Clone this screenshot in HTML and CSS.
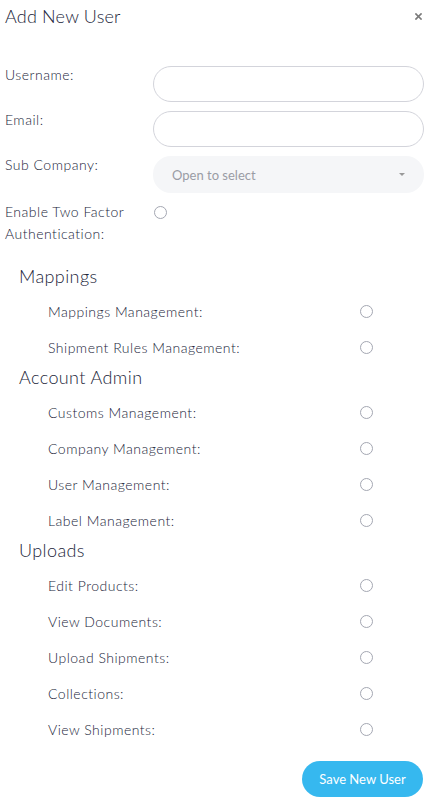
FILE: index.html
```html
<!DOCTYPE html>
<html lang="en">
<head>
<meta charset="utf-8">
<title>Add New User</title>
<link rel="stylesheet" href="styles.css">
</head>
<body>
<div class="modal">
  <header class="modal-header">
    <h1 class="modal-title">Add New User</h1>
    <button class="close-btn" aria-label="Close">
      <svg width="7" height="7" viewBox="0 0 7 7"><path d="M1 1 L6 6 M6 1 L1 6" stroke="#7a7a7a" stroke-width="1.7" stroke-linecap="square"/></svg>
    </button>
  </header>

  <div class="fields">
    <div class="field">
      <label class="field-label">Username:</label>
      <input class="text-input" type="text">
    </div>
    <div class="field">
      <label class="field-label">Email:</label>
      <input class="text-input" type="text">
    </div>
    <div class="field">
      <label class="field-label">Sub Company:</label>
      <div class="select">
        <span class="select-placeholder">Open to select</span>
        <span class="caret"></span>
      </div>
    </div>
    <div class="field field-check">
      <label class="field-label">Enable Two Factor Authentication:</label>
      <span class="radio"></span>
    </div>
  </div>

  <section class="group">
    <h2 class="group-title">Mappings</h2>
    <div class="perm"><span class="perm-label">Mappings Management:</span><span class="radio"></span></div>
    <div class="perm"><span class="perm-label">Shipment Rules Management:</span><span class="radio"></span></div>
  </section>

  <section class="group">
    <h2 class="group-title">Account Admin</h2>
    <div class="perm"><span class="perm-label">Customs Management:</span><span class="radio"></span></div>
    <div class="perm"><span class="perm-label">Company Management:</span><span class="radio"></span></div>
    <div class="perm"><span class="perm-label">User Management:</span><span class="radio"></span></div>
    <div class="perm"><span class="perm-label">Label Management:</span><span class="radio"></span></div>
  </section>

  <section class="group">
    <h2 class="group-title">Uploads</h2>
    <div class="perm"><span class="perm-label">Edit Products:</span><span class="radio"></span></div>
    <div class="perm"><span class="perm-label">View Documents:</span><span class="radio"></span></div>
    <div class="perm"><span class="perm-label">Upload Shipments:</span><span class="radio"></span></div>
    <div class="perm"><span class="perm-label">Collections:</span><span class="radio"></span></div>
    <div class="perm"><span class="perm-label">View Shipments:</span><span class="radio"></span></div>
  </section>

  <div class="actions">
    <button class="save-btn">Save New User</button>
  </div>
</div>
</body>
</html>
```

FILE: styles.css
```css
* { box-sizing: border-box; }

body {
  margin: 0;
  background: #ffffff;
  font-family: "Lato", "Open Sans", sans-serif;
  font-weight: 300;
  color: #22253a;
}

.modal {
  width: 431px;
  padding: 0 7px 0 5px;
}

.modal-header {
  display: flex;
  align-items: center;
  justify-content: space-between;
  height: 32px;
}

.modal-title {
  margin: 0;
  font-size: 18px;
  font-weight: 300;
  line-height: 32px;
  letter-spacing: 0.2px;
  color: #22253a;
}

.close-btn {
  border: 0;
  background: none;
  padding: 0;
  margin-right: 2px;
  width: 7px;
  height: 7px;
  display: flex;
}

.fields {
  margin-top: 34px;
  display: flex;
  flex-direction: column;
  gap: 9px;
}

.field {
  display: grid;
  grid-template-columns: 148px 1fr;
  align-items: start;
}

.field-label {
  font-size: 14px;
  line-height: 18px;
  letter-spacing: 0.5px;
}

.text-input {
  height: 36px;
  border: 1px solid #d3d4db;
  border-radius: 18px;
  background: #fff;
  outline: none;
}

.select {
  height: 37px;
  border-radius: 18px;
  background: #f5f6f8;
  display: flex;
  align-items: center;
  justify-content: space-between;
  padding: 0 19px 0 19px;
}

.select-placeholder {
  font-size: 13px;
  font-weight: 400;
  color: #9a9ca5;
}

.caret {
  width: 0;
  height: 0;
  border-left: 3.5px solid transparent;
  border-right: 3.5px solid transparent;
  border-top: 3.5px solid #999;
}

.field-check {
  margin-top: -1px;
}

.field-check .field-label {
  width: 130px;
  line-height: 22px;
}

.field-check .radio {
  margin-top: 5px;
  margin-left: 1px;
}

.radio {
  display: inline-block;
  width: 13px;
  height: 13px;
  border: 1px solid #a4a7b2;
  border-radius: 50%;
  background: #fff;
}

.group {
  padding-left: 14px;
}

.group:first-of-type {
  margin-top: 19px;
}

.group-title {
  margin: 0 0 5px 0;
  font-size: 18px;
  font-weight: 300;
  line-height: 24px;
  letter-spacing: 0.4px;
  color: #22253a;
}

.perm {
  display: grid;
  grid-template-columns: 312px 13px;
  align-items: center;
  height: 36px;
  padding-left: 29px;
}

.perm-label {
  font-size: 14px;
  letter-spacing: 0.5px;
  color: #22253a;
}

.actions {
  display: flex;
  justify-content: flex-end;
  margin-top: 14px;
}

.save-btn {
  width: 121px;
  height: 36px;
  border: 0;
  border-radius: 18px;
  background: #36b8ef;
  color: #fff;
  font-family: "Lato", "Open Sans", sans-serif;
  font-weight: 400;
  font-size: 13px;
  margin-right: 1px;
}
```
